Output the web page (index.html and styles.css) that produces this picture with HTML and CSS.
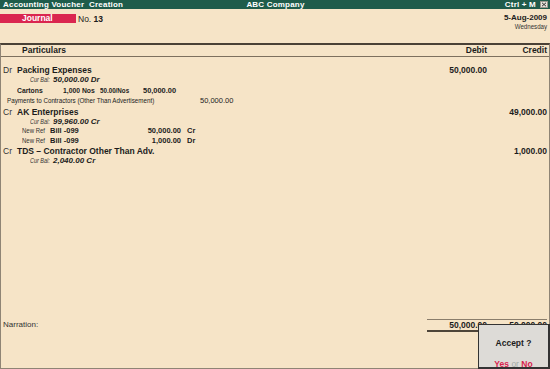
FILE: index.html
```html
<!DOCTYPE html>
<html lang="en">
<head>
    <meta charset="UTF-8">
    <meta name="viewport" content="width=device-width, initial-scale=1.0">
    <title>Accounting Voucher Creation</title>
    <link rel="stylesheet" href="styles.css">
</head>
<body>

    <!-- Title bar -->
    <div class="titlebar">
        <span class="title-left">Accounting Voucher&nbsp; Creation</span>
        <span class="title-center">ABC Company</span>
        <span class="title-right">
            Ctrl + M
            <svg class="close-box" width="8" height="7" viewBox="0 0 8 7">
                <rect x="0.5" y="0.5" width="7" height="6" fill="#e8e4dc" stroke="#9a968c"/>
                <path d="M2 1.8 L6 5.2 M6 1.8 L2 5.2" stroke="#333" stroke-width="1"/>
            </svg>
        </span>
    </div>

    <!-- Voucher head -->
    <div class="voucher-head">
        <div class="voucher-type">
            <span class="type-tag">Journal</span>
            <span class="voucher-no">No. <b>13</b></span>
        </div>
        <div class="voucher-date">
            <div class="date">5-Aug-2009</div>
            <div class="day">Wednesday</div>
        </div>
    </div>

    <!-- Ledger entries -->
    <div class="ledger">
        <div class="ledger-head grid">
            <span class="col-part">Particulars</span>
            <span class="num">Debit</span>
            <span class="num">Credit</span>
        </div>

        <div class="entries">
            <div class="row main grid">
                <span class="col-part"><span class="drcr">Dr</span>Packing Expenses</span>
                <span class="num">50,000.00</span>
                <span class="num"></span>
            </div>
            <div class="row curbal"><i class="cond">Cur Bal:</i><b>50,000.00 Dr</b></div>

            <div class="row item">
                <span class="cond">Cartons</span>
                <span class="cond">1,000 Nos</span>
                <span class="cond tight">50.00/Nos</span>
                <span class="cond loose">50,000.00</span>
            </div>
            <div class="row alloc">
                <span class="cond">Payments to Contractors (Other Than Advertisement)</span>
                <span class="alloc-amt">50,000.00</span>
            </div>

            <div class="row main gap grid">
                <span class="col-part"><span class="drcr">Cr</span>AK Enterprises</span>
                <span class="num"></span>
                <span class="num">49,000.00</span>
            </div>
            <div class="row curbal"><i class="cond">Cur Bal:</i><b>99,960.00 Cr</b></div>
            <div class="row bill">
                <span class="cond">New Ref</span>
                <b>Bill -099</b>
                <b class="bill-amt">50,000.00</b>
                <b class="bill-drcr">Cr</b>
            </div>
            <div class="row bill">
                <span class="cond">New Ref</span>
                <b>Bill -099</b>
                <b class="bill-amt">1,000.00</b>
                <b class="bill-drcr">Dr</b>
            </div>

            <div class="row main grid">
                <span class="col-part"><span class="drcr">Cr</span>TDS &ndash; Contractor Other Than Adv.</span>
                <span class="num"></span>
                <span class="num">1,000.00</span>
            </div>
            <div class="row curbal"><i class="cond">Cur Bal:</i><b>2,040.00 Cr</b></div>
        </div>

        <div class="ledger-foot grid">
            <span class="narration">Narration:</span>
            <span class="num total">50,000.00</span>
            <span class="num total">50,000.00</span>
        </div>
    </div>

    <!-- Accept prompt -->
    <div class="accept-box">
        <div class="accept-title">Accept ?</div>
        <div class="accept-choice"><span class="hot">Yes</span> <span class="or">or</span> <span class="hot">No</span></div>
    </div>

</body>
</html>
```

FILE: styles.css
```css
body {
    margin: 0;
    width: 550px;
    height: 369px;
    background-color: #f6e4c7;
    font-family: "Liberation Sans", Arial, sans-serif;
    font-size: 8.5px;
    color: #1c1c1c;
    position: relative;
    overflow: hidden;
    display: flex;
    flex-direction: column;
}

/* Tally draws its secondary text in a condensed face */
.cond {
    display: inline-block;
    transform: scaleX(0.78);
    transform-origin: left center;
}

/* Title bar */
.titlebar {
    display: grid;
    grid-template-columns: 1fr auto 1fr;
    height: 9px;
    line-height: 9px;
    padding: 0 2px 0 3px;
    background-color: #1f5c4b;
    color: #fff;
    font-size: 8px;
    font-weight: bold;
    letter-spacing: 0.2px;
}

.title-right {
    justify-self: end;
    display: flex;
    align-items: center;
    gap: 4px;
}

/* Voucher type and date */
.voucher-head {
    display: flex;
    justify-content: space-between;
    height: 34px;
}

.voucher-type {
    display: flex;
    align-items: center;
    height: 9px;
    margin-top: 5px;
}

.type-tag {
    width: 54px;
    height: 9px;
    line-height: 9px;
    padding-left: 22px;
    background-color: #da2650;
    color: #fff;
    font-weight: bold;
}

.voucher-no {
    margin-left: 2px;
}

.voucher-date {
    padding: 4px 3px 0 0;
    text-align: right;
}

.voucher-date .date {
    font-weight: bold;
    font-size: 8px;
    line-height: 9px;
}

.voucher-date .day {
    font-size: 8px;
    line-height: 10px;
    color: #333;
    transform: scaleX(0.77);
    transform-origin: right center;
}

/* Ledger box */
.ledger {
    flex: 1;
    display: flex;
    flex-direction: column;
    border: 1px solid #8f8475;
    border-top: 2px solid #4a4136;
}

.grid {
    display: grid;
    grid-template-columns: 1fr 60px 60px;
    padding-right: 2px;
}

.num {
    text-align: right;
}

.ledger-head {
    height: 11px;
    line-height: 11px;
    font-weight: bold;
    border-bottom: 1px solid #7d705e;
}

.ledger-head .col-part {
    padding-left: 21px;
}

.entries {
    padding-top: 8px;
}

.row {
    height: 10px;
    line-height: 10px;
    white-space: nowrap;
}

.main {
    font-weight: bold;
}

.main .col-part {
    padding-left: 2px;
}

.drcr {
    display: inline-block;
    width: 14px;
    font-weight: normal;
    color: #333;
}

.gap {
    margin-top: 1px;
}

.curbal {
    height: 9px;
    line-height: 9px;
    padding-left: 29px;
    font-size: 8px;
}

.curbal i {
    width: 30px;
    margin-right: -7px;
    color: #333;
    transform: scaleX(0.68);
}

.curbal b {
    font-style: italic;
}

.item {
    display: grid;
    grid-template-columns: 46px 37px 43px auto;
    margin-top: 2px;
    padding-left: 16px;
    font-weight: bold;
    font-size: 8px;
}

.item .cond {
    transform: scaleX(0.85);
}

.item .tight {
    transform: scaleX(0.78);
}

.item .loose {
    transform: scaleX(0.93);
}

.alloc {
    display: grid;
    grid-template-columns: 193px auto;
    padding-left: 6px;
    font-size: 8px;
    color: #222;
}

.alloc-amt {
    font-size: 7.5px;
}

.bill {
    display: grid;
    grid-template-columns: 28px 81px 50px auto;
    padding-left: 21px;
    font-size: 7.5px;
}

.bill .cond {
    font-size: 8px;
    color: #333;
    transform: scaleX(0.75);
}

.bill-amt {
    text-align: right;
}

.bill-drcr {
    padding-left: 6px;
}

/* Totals and narration */
.ledger-foot {
    margin-top: auto;
    padding-bottom: 36px;
    line-height: 10px;
}

.narration {
    padding: 1px 0 0 2px;
    font-size: 8px;
    color: #333;
}

.total {
    font-weight: bold;
    border-top: 1px solid #8a7d6b;
    border-bottom: 2px solid #4e4539;
}

/* Accept prompt over the totals */
.accept-box {
    position: absolute;
    left: 478px;
    top: 324px;
    width: 69px;
    height: 42px;
    display: flex;
    flex-direction: column;
    align-items: center;
    background-color: #dddbd7;
    border: 1px solid #333;
    border-right-width: 2px;
    border-bottom-width: 2px;
}

.accept-title {
    margin-top: 13px;
    font-weight: bold;
}

.accept-choice {
    margin-top: 11px;
    font-weight: bold;
}

.accept-choice .hot {
    color: #d9234d;
}

.accept-choice .or {
    color: #a3aaa6;
    font-weight: normal;
}
```
